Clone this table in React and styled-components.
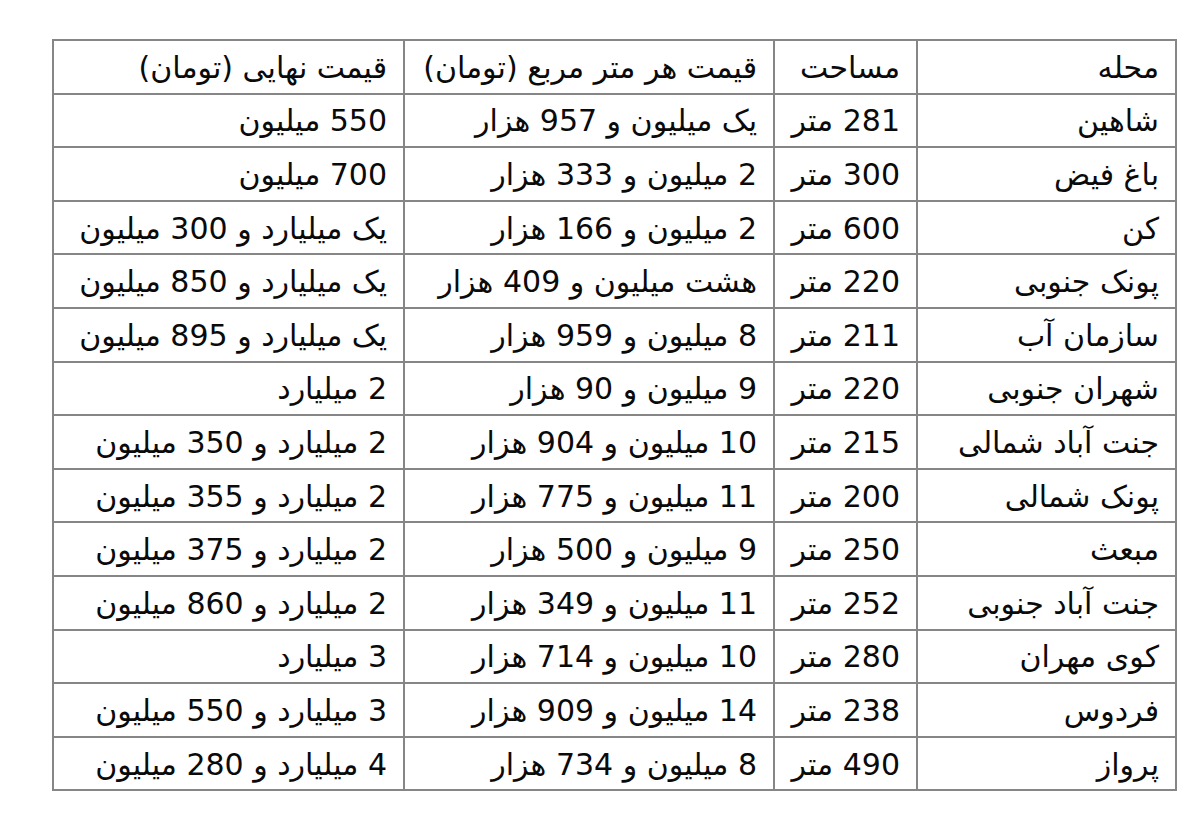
import React from "react";
import styled, { createGlobalStyle } from "styled-components";

const GlobalStyle = createGlobalStyle`
  html, body {
    margin: 0;
    padding: 0;
    background: #fff;
  }
`;

const Page = styled.div`
  padding: 39px 0 0 52px;
  font-family: "DejaVu Sans", Tahoma, sans-serif;
`;

const Table = styled.table`
  direction: rtl;
  width: 1123px;
  border-collapse: collapse;
  table-layout: fixed;
  border: 2px solid #868686;
  color: #0a0a0a;
  font-size: 30px;
`;

const Row = styled.tr`
  height: 53.6px;
`;

const Cell = styled.td`
  border: 2px solid #868686;
  padding: 2px 16px 0 6px;
  text-align: right;
  white-space: nowrap;
  vertical-align: middle;
  line-height: 1;
`;

const columns = [259, 143, 370, 351];

const header = ["محله", "مساحت", "قیمت هر متر مربع (تومان)", "قیمت نهایی (تومان)"];

const rows = [
  ["شاهین", "281 متر", "یک میلیون و 957 هزار", "550 میلیون"],
  ["باغ فیض", "300 متر", "2 میلیون و 333 هزار", "700 میلیون"],
  ["کن", "600 متر", "2 میلیون و 166 هزار", "یک میلیارد و 300 میلیون"],
  ["پونک جنوبی", "220 متر", "هشت میلیون و 409 هزار", "یک میلیارد و 850 میلیون"],
  ["سازمان آب", "211 متر", "8 میلیون و 959 هزار", "یک میلیارد و 895 میلیون"],
  ["شهران جنوبی", "220 متر", "9 میلیون و 90 هزار", "2 میلیارد"],
  ["جنت آباد شمالی", "215 متر", "10 میلیون و 904 هزار", "2 میلیارد و 350 میلیون"],
  ["پونک شمالی", "200 متر", "11 میلیون و 775 هزار", "2 میلیارد و 355 میلیون"],
  ["مبعث", "250 متر", "9 میلیون و 500 هزار", "2 میلیارد و 375 میلیون"],
  ["جنت آباد جنوبی", "252 متر", "11 میلیون و 349 هزار", "2 میلیارد و 860 میلیون"],
  ["کوی مهران", "280 متر", "10 میلیون و 714 هزار", "3 میلیارد"],
  ["فردوس", "238 متر", "14 میلیون و 909 هزار", "3 میلیارد و 550 میلیون"],
  ["پرواز", "490 متر", "8 میلیون و 734 هزار", "4 میلیارد و 280 میلیون"],
];

const App = () => {
  return (
    <Page>
      <GlobalStyle />
      <Table>
        <colgroup>
          {columns.map((w, i) => (
            <col key={i} style={{ width: w }} />
          ))}
        </colgroup>
        <tbody>
          <Row>
            {header.map((h) => (
              <Cell key={h}>{h}</Cell>
            ))}
          </Row>
          {rows.map((r) => (
            <Row key={r[0]}>
              {r.map((c, i) => (
                <Cell key={i}>{c}</Cell>
              ))}
            </Row>
          ))}
        </tbody>
      </Table>
    </Page>
  );
};

export default App;
